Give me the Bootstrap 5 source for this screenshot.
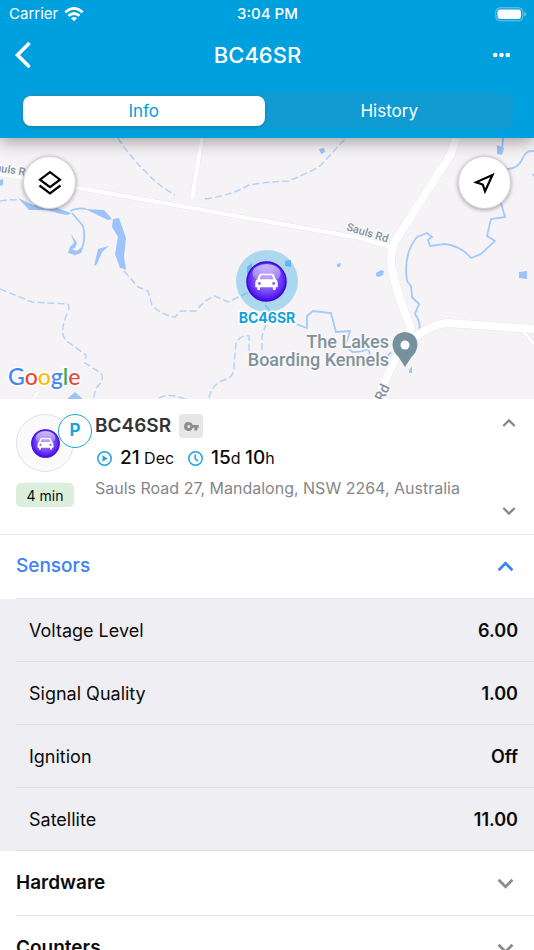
<!DOCTYPE html>
<html lang="en">
<head>
<meta charset="utf-8">
<meta name="viewport" content="width=device-width, initial-scale=1">
<title>BC46SR</title>
<link href="https://cdn.jsdelivr.net/npm/bootstrap@5.3.0/dist/css/bootstrap.min.css" rel="stylesheet">
<style>
body { font-family: Inter, "Liberation Sans", sans-serif; color: #0b0b0c; background: #fff; }
svg { display: block; flex: none; }
.plain { background: none; border: 0; padding: 0; color: inherit; }
.app-head { background: #009fdd; color: #fff; box-shadow: 0 3px 16px rgba(0,0,0,.38); z-index: 2; }
.status { height: 28px; font-size: 15px; padding: 0 8px 0 9px; }
.status > * { flex: 1 1 0; }
.carrier { gap: 6px; }
.clock { font-weight: 500; }
.title-bar { height: 54px; padding: 0 22px 0 15px; }
.title-bar h1 { font-size: 22px; font-weight: 500; }
.title-bar > button { height: 32px; }
.back-btn { width: 20px; }
.more-btn { width: 32px; }
.segments { margin: 11px 21px 9px 20px; padding: 3px; gap: 4px; border-radius: 10px; background: #119bd3; }
.segments button { height: 30px; font-size: 17px; line-height: 30px; border-radius: 8px; }
.segments .chosen { background: #fff; color: #009fdd; box-shadow: 0 1px 3px rgba(0,0,0,.2); }
.map-view { height: 261px; background: #f6f3f7; }
.round-btn { top: 18px; width: 53px; height: 53px; border: 1px solid #d4d2d5; background: #fff; color: #000; box-shadow: 0 1px 4px rgba(0,0,0,.35); }
.layers-btn { left: 23px; }
.locate-btn { right: 23px; }
.summary { padding: 15px 16px 12px; border-bottom: 1px solid #e9e9eb; }
.thumb-col { width: 79px; }
.thumb { width: 58px; height: 58px; border: 1px solid #e2e2e2; background: #fafafa; }
.park { left: 42px; top: 0; width: 34px; height: 34px; border: 1px solid #1ba5dc; background: #fff; color: #1ba5dc; font-size: 17px; font-weight: 700; }
.age { width: 58px; height: 24px; margin-top: 11px; border-radius: 5px; background: #dbefdc; font-size: 14px; }
.unit-name { font-size: 19px; font-weight: 600; line-height: 24px; color: #333437; }
.key-tag { width: 24px; height: 24px; border-radius: 4px; background: #e6e6e6; color: #8c8c8c; }
.times { font-size: 16px; line-height: 24px; margin-top: 8px; padding-left: 2px; }
.times b { font-size: 19px; font-weight: 500; }
.times svg { color: #1ba5dc; }
.since { margin-right: 14px; }
.address { font-size: 16px; line-height: 24px; margin-top: 6px; color: #86868a; }
.steps { height: 108px; padding: 2px 2px 4px; color: #87878b; }
.group-head { min-height: 65px; margin-left: 16px; padding-right: 20px; border-bottom: 1px solid #e6e6ea; font-size: 19px; color: #0b0b0c; }
.group-head.shut { font-weight: 600; }
.group-head.shut svg { color: #8b8b90; }
.group-head.open { min-height: 64px; font-weight: 500; color: #3d82f7; }
.readings { background: #efeef3; }
.reading { height: 63px; margin-left: 16px; padding: 1px 16px 0 13px; border-bottom: 1px solid #dddce1; font-size: 18px; }
.reading dt { font-weight: 400; }
.reading dd { font-weight: 600; }
</style>
<script src="https://cdn.jsdelivr.net/npm/bootstrap@5.3.0/dist/js/bootstrap.bundle.min.js"></script>
</head>
<body>
<svg width="0" height="0" class="position-absolute" aria-hidden="true">
  <defs>
    <radialGradient id="ball" cx=".5" cy=".45" r=".55">
      <stop offset="0" stop-color="#a487f6"/><stop offset=".55" stop-color="#7b50f5"/><stop offset=".85" stop-color="#5a1ff5"/><stop offset="1" stop-color="#3c06dd"/>
    </radialGradient>
    <linearGradient id="gloss" x1="0" y1="0" x2="0" y2="1">
      <stop offset="0" stop-color="#fff" stop-opacity=".65"/><stop offset="1" stop-color="#fff" stop-opacity=".15"/>
    </linearGradient>
    <symbol id="car" viewBox="0 0 42 42">
      <circle cx="21" cy="21" r="20" fill="url(#ball)" stroke="#3c08d8" stroke-width="1.500"/>
      <ellipse cx="21" cy="12.500" rx="14.500" ry="9.500" fill="url(#gloss)"/>
      <path fill="#fff" fill-rule="evenodd" d="M15.500 13h11q1.600 0 2.200 1.500l1.600 4.300q2.200.9 2.200 3.200v5h-2v1.500q0 1.500-1.500 1.500t-1.500-1.500V27h-13v1.500q0 1.500-1.500 1.500t-1.500-1.500V27h-2v-5q0-2.300 2.200-3.200l1.600-4.300q.6-1.500 2.200-1.500zM15.500 14.700l-1.500 4h14l-1.500-4zM13.700 21.500a1.500 1.500 0 1 0 0 3 1.500 1.500 0 1 0 0-3zM28.300 21.500a1.500 1.500 0 1 0 0 3 1.500 1.500 0 1 0 0-3z"/>
    </symbol>
    <symbol id="down" viewBox="0 0 16 10"><path d="M1.500 1.500 8 8l6.500-6.500" fill="none" stroke="currentColor" stroke-width="2.600"/></symbol>
    <symbol id="up" viewBox="0 0 16 10"><path d="M1.500 8.500 8 2l6.500 6.500" fill="none" stroke="currentColor" stroke-width="2.600"/></symbol>
  </defs>
</svg>

<div class="vh-100 overflow-hidden d-flex flex-column">
  <header class="app-head position-relative flex-shrink-0">
    <div class="status d-flex align-items-center">
      <div class="carrier d-flex align-items-center"><span>Carrier</span>
        <svg width="20" height="15" viewBox="0 0 20 15" fill="none" stroke="#fff" stroke-width="2.800"><path d="M1.300 5.200q8.700-7.600 17.400 0M4.500 8.800q5.500-4.600 11 0"/><path d="M7 11.300q3-2.400 6 0L10 14.300z" fill="#fff" stroke="none"/></svg>
      </div>
      <div class="clock text-center">3:04 PM</div>
      <div class="d-flex justify-content-end">
        <svg width="31" height="15" viewBox="0 0 31 15"><rect x=".8" y=".8" width="27" height="13" rx="4" fill="none" stroke="#fff" stroke-opacity=".45"/><rect x="2.500" y="2.500" width="23.500" height="9.500" rx="2.400" fill="#fff"/><path d="M29.300 5v4.500q1.700-.8 1.700-2.200t-1.700-2.300z" fill="#fff" fill-opacity=".5"/></svg>
      </div>
    </div>
    <div class="title-bar d-flex align-items-center justify-content-between">
      <button class="plain back-btn" type="button" aria-label="Back"><svg width="16" height="26" viewBox="0 0 16 26"><path d="M13.500 2 2.500 13l11 11" fill="none" stroke="#fff" stroke-width="3.600" stroke-linecap="round"/></svg></button>
      <h1 class="m-0">BC46SR</h1>
      <button class="plain more-btn d-flex align-items-center justify-content-end" type="button" aria-label="More"><svg width="20" height="6" viewBox="0 0 20 6" fill="#fff"><circle cx="3.200" cy="3" r="2.300"/><circle cx="9.500" cy="3" r="2.300"/><circle cx="15.800" cy="3" r="2.300"/></svg></button>
    </div>
    <div class="segments d-flex">
      <button class="plain chosen flex-fill w-50" type="button">Info</button>
      <button class="plain flex-fill w-50" type="button">History</button>
    </div>
  </header>

  <section class="map-view position-relative flex-shrink-0" aria-label="Map">
    <svg width="100%" height="100%" viewBox="0 138 534 261" preserveAspectRatio="xMidYMid slice">
      <g fill="none" stroke="#b4d3fb" stroke-width="1.500" stroke-dasharray="7 3">
        <path d="M118 138q12 19 28 34 10 12 29 23M205 199q25-3 44-14 18-3 40-4 14-6 30-14l28-30"/>
        <path d="M0 201q9-2 18-1M0 289l32 13 35 2q4 2 0 10-9 22 1 28l18 13-1 8 16 10q4 7-5 15l-3 12"/>
        <path d="M124 271l14 16 10 4 4 14q9 10 23 12l6-6h15q9-12 19-15l13 6 21-10q8 0 22 21"/>
        <path d="M159 398q12-6 28 2M209 398q3-15 18-19 8-4 7-14l2-22q4-8 13-7v15M262 350v-14l4-12"/>
      </g>
      <g fill="none" stroke="#a4c9fb" stroke-width="1.800">
        <path d="M70 211q8-4 16-2M72 213l11 13q3 12-1 22l-8 7"/>
        <path d="M296 324l11 4v-12l6-5 18 2 5 19 14-1-3 10q-5 4 0 7l6 4q10 0 15-3l6 15q6 4 11-5l6-7"/>
        <path d="M503 138l-1 12M507 169q10 0 15-9 3-10 12-9M501 203l4 14-14 2-4 17 8 5-14 13-10 4q-10-12-26-14l-15 2-2-6 4-3-5-4-10 4q-14 17-10 44l4 5 1 11 7 7-4 10q10 14-2 27"/>
      </g>
      <g fill="#9cc4fb">
        <path d="M18 198l15 7 13-1 25 9-3 2-7-1-14-4-18 0zM85 209l19 1 8 9-4 1zM113 219l6-1 7 20-2 19 2 12-6-1-5-14 3-17-6-10zM71 234l6 9-2 5-3 1 4 2 7-3-2 5-6 2-7-2 2-6 4-4zM98 249l11-3-7 6-5 12-3 2z"/>
        <path d="M0 180l3-1v6l-3 1zM319 149l5-1 1 4-4 2zM497 145l7 3-2 7-5-1zM337 264l4-1-1 4h-3zM376 273l5-3 3 1-1 4-4 2-3-1zM519 272l8-1v8l-8-1zM409 370l3-4v7h-3zM123 268h2l1 3zM532 174h2v3zM66 400l9-8 9 8z"/>
      </g>
      <g fill="none" stroke="#e9e6ea">
        <path stroke-width="5" d="M0 174 360 238 390 247M202 138l-10 61"/>
        <path stroke-width="9" d="M456 138l-5 16-52 81q-9 13-8 31 8 34 20 62l-16 31-19 43M405 344q25-20 43-21l86 6"/>
        <path stroke-width="5" d="M523 331l11 13M30 404l8-12"/>
      </g>
      <g fill="none" stroke="#fff">
        <path stroke-width="4" d="M0 174 360 238 390 247M202 138l-10 61"/>
        <path stroke-width="8" d="M456 138l-5 16-52 81q-9 13-8 31 8 34 20 62l-16 31-19 43M405 344q25-20 43-21l86 6"/>
        <path stroke-width="3" d="M523 331l11 13M30 404l8-12"/>
      </g>
      <g font-family="Roboto, sans-serif" font-weight="500" fill="#80939b" stroke="#f9f8fa" stroke-width="3" stroke-linejoin="round" paint-order="stroke">
        <text font-size="11" transform="translate(-5 171) rotate(9)">auls Rd</text>
        <text font-size="11" transform="translate(346 230) rotate(17)">Sauls Rd</text>
        <text font-size="14" transform="translate(383 402) rotate(-65)">Rd</text>
        <g font-size="18" text-anchor="end"><text x="389" y="348">The Lakes</text><text x="389" y="366">Boarding Kennels</text></g>
      </g>
      <path fill="#76919d" d="M405 332q12 1 12.500 13-.5 7-6 12l-6.500 10-6.500-10q-5.500-5-6-12 .5-12 12.500-13z"/><circle cx="405" cy="345" r="4.500" fill="#fff"/>
      <circle cx="267" cy="281" r="31" fill="#1ba5dc" fill-opacity=".34"/>
      <path fill="#62b4f2" d="M247 267l5-4v8l-5 3zM285 261l6-1v7l-6-1z"/>
      <use href="#car" x="246" y="261" width="41" height="41"/>
      <text x="267" y="323" text-anchor="middle" font-size="14" font-weight="700" fill="#12a2da" stroke="#fff" stroke-width="3" paint-order="stroke">BC46SR</text>
      <text x="8" y="385" font-family="Lato, sans-serif" font-size="23" font-weight="500" stroke="#fff" stroke-width="3" paint-order="stroke"><tspan fill="#4285f4">G</tspan><tspan fill="#ea4335">o</tspan><tspan fill="#fbbc05">o</tspan><tspan fill="#4285f4">g</tspan><tspan fill="#34a853">l</tspan><tspan fill="#ea4335">e</tspan></text>
    </svg>
    <button class="round-btn layers-btn position-absolute rounded-circle d-flex align-items-center justify-content-center p-0" type="button" aria-label="Map layers">
      <svg width="26" height="26" viewBox="0 0 26 26" fill="none" stroke="currentColor" stroke-width="2.200"><path d="M13 2.200 23 9.700l-10 7.500L3 9.700zM2.500 15.500 13 23.300l10.500-7.800"/></svg>
    </button>
    <button class="round-btn locate-btn position-absolute rounded-circle d-flex align-items-center justify-content-center p-0" type="button" aria-label="Locate">
      <svg width="24" height="24" viewBox="0 0 24 24" fill="none" stroke="currentColor" stroke-width="2.200"><path d="M19.500 4 3 11.300l6.700 2.200 2.300 6.700z"/></svg>
    </button>
  </section>

  <main class="flex-shrink-0">
    <section class="summary d-flex">
      <div class="thumb-col flex-shrink-0 position-relative">
        <div class="thumb rounded-circle d-flex align-items-center justify-content-center"><svg width="29" height="29"><use href="#car"/></svg></div>
        <span class="park position-absolute rounded-circle d-flex align-items-center justify-content-center">P</span>
        <div class="age d-flex align-items-center justify-content-center">4 min</div>
      </div>
      <div class="flex-grow-1">
        <div class="d-flex align-items-center gap-2">
          <h2 class="unit-name m-0">BC46SR</h2>
          <span class="key-tag d-flex align-items-center justify-content-center"><svg width="15" height="9" viewBox="0 0 16 10" fill="currentColor"><path fill-rule="evenodd" d="M5 0a5 5 0 0 1 4.500 3.300H16v3.200h-1.500V9.500h-3.300V6.500H9.500A5 5 0 1 1 5 0zM5 3.200a1.700 1.700 0 1 0 0 3.400 1.700 1.700 0 1 0 0-3.400z"/></svg></span>
        </div>
        <div class="times d-flex align-items-center">
          <svg class="me-2" width="15" height="15" viewBox="0 0 15 15"><circle cx="7.500" cy="7.500" r="6.700" fill="none" stroke="currentColor" stroke-width="1.500"/><path d="M5.500 4.300v6.400l5-3.200z" fill="currentColor"/></svg>
          <span class="since"><b>21</b> Dec</span>
          <svg class="me-2" width="15" height="15" viewBox="0 0 15 15" fill="none" stroke="currentColor" stroke-width="1.500"><circle cx="7.500" cy="7.500" r="6.700"/><path d="M7.200 3.500v4.300l3 2.300"/></svg>
          <span><b>15</b>d <b>10</b>h</span>
        </div>
        <div class="address">Sauls Road 27, Mandalong, NSW 2264, Australia</div>
      </div>
      <div class="steps d-flex flex-column justify-content-between">
        <button class="plain" type="button" aria-label="Previous unit"><svg width="14" height="14"><use href="#up"/></svg></button>
        <button class="plain" type="button" aria-label="Next unit"><svg width="14" height="14"><use href="#down"/></svg></button>
      </div>
    </section>

    <section class="d-flex flex-column">
      <button class="plain group-head open d-flex align-items-center justify-content-between" type="button" aria-expanded="true" aria-controls="sensors">Sensors<svg width="17" height="11"><use href="#up"/></svg></button>
      <dl id="sensors" class="readings m-0">
        <div class="reading d-flex align-items-center justify-content-between"><dt>Voltage Level</dt><dd class="m-0">6.00</dd></div>
        <div class="reading d-flex align-items-center justify-content-between"><dt>Signal Quality</dt><dd class="m-0">1.00</dd></div>
        <div class="reading d-flex align-items-center justify-content-between"><dt>Ignition</dt><dd class="m-0">Off</dd></div>
        <div class="reading d-flex align-items-center justify-content-between"><dt>Satellite</dt><dd class="m-0">11.00</dd></div>
      </dl>
      <button class="plain group-head shut d-flex align-items-center justify-content-between" type="button" aria-expanded="false">Hardware<svg width="17" height="11"><use href="#down"/></svg></button>
      <button class="plain group-head shut d-flex align-items-center justify-content-between" type="button" aria-expanded="false">Counters<svg width="17" height="11"><use href="#down"/></svg></button>
    </section>
  </main>
</div>
</body>
</html>
